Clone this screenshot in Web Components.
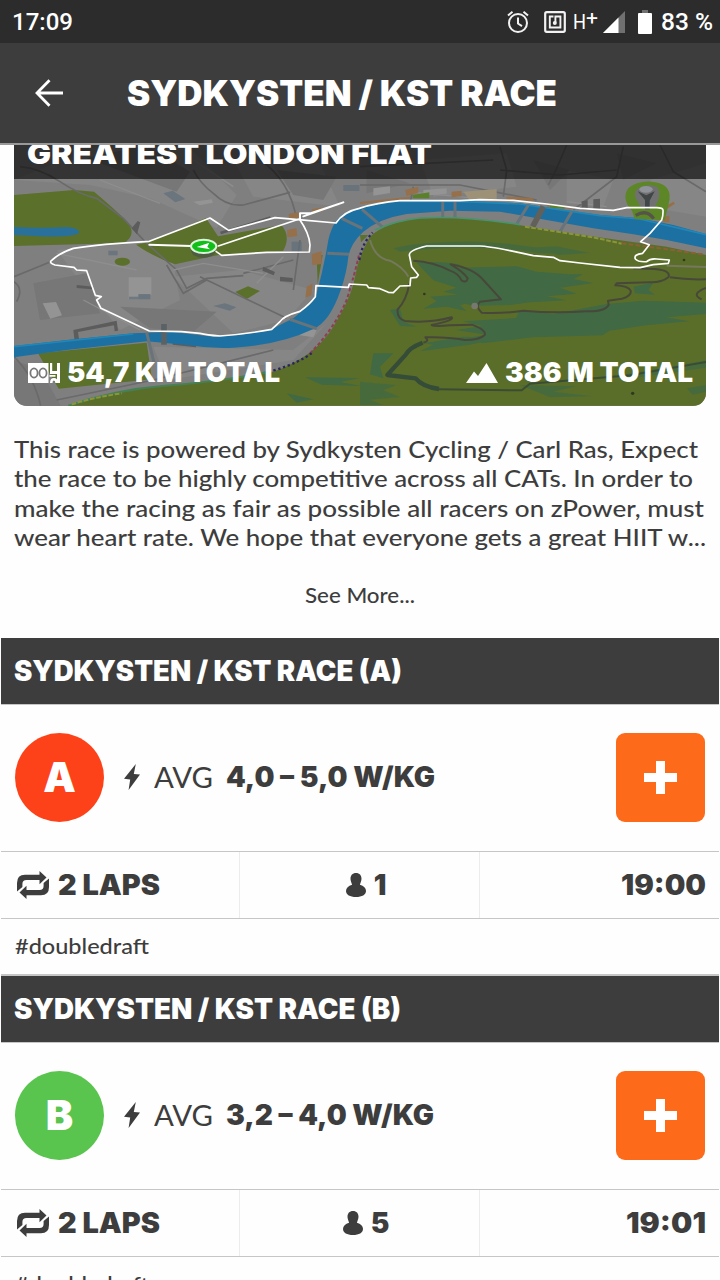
<!DOCTYPE html>
<html lang="en">
<head>
<meta charset="utf-8">
<title>Sydkysten / KST Race</title>
<style>
  html, body {
    margin: 0;
    background: #fefefe;
  }

  body {
    height: 1280px;
    overflow: hidden;
    color: #3d3d3d;
    font-family: Inter, "Open Sans", sans-serif;
    --dark: #3d3d3d;
    --line: #c6c6c6;
  }
</style>
</head>
<body>
<race-screen></race-screen>

<script>
/**
 * fit-text - one line of text, stretched to the width given in px
 */
class FitText extends HTMLElement {
  connectedCallback() {
    this.attachShadow({ mode: 'open' });
    this.shadowRoot.innerHTML = `
      <style>
        :host { display: block; flex: none; }
        span { display: inline-block; white-space: pre; transform-origin: 0 50%; }
      </style>
      <span></span>
    `;
    const span = this.shadowRoot.querySelector('span');
    span.textContent = this.getAttribute('text');
    const target = Number(this.getAttribute('width'));
    if (!target) return;
    const natural = span.getBoundingClientRect().width;
    this.style.width = `${target}px`;
    span.style.transform = `scaleX(${(target / natural).toFixed(4)})`;
  }
}
customElements.define('fit-text', FitText);

/**
 * ui-icon - inline SVG icons
 */
const LAPS_ARROW = 'M0 20.500v-8.500q0-8.300 8-8.300h14.500V0l7 6.500-7 6.800V9H9.500Q5.400 9 5.400 13v3z';

const ICONS = {
  alarm: [22, 24, `<g fill="none" stroke="#f2f2f2" stroke-width="2"><circle cx="11" cy="13" r="9"/><path d="M11 7.500v6l4 2.600M1 5.500l4.500-3.800M21 5.500l-4.500-3.800"/></g>`],
  nfc: [22, 24, `<g fill="none" stroke="#f2f2f2"><rect x="1.200" y="2.200" width="19.600" height="19.600" rx="1.500" stroke-width="2.200"/><path d="M9.500 6.500H5.800v11h10.600v-11h-5v6" stroke-width="1.900"/></g><circle cx="10.800" cy="13" r="2" fill="#f2f2f2"/>`],
  signal: [22, 22, `<path d="M0 22L22 0v22z" fill="#707070"/><path d="M0 22L15.500 6.500V22z" fill="#fff"/>`],
  battery: [14, 24, `<path d="M4 0h6v3H4z" fill="#707070"/><path d="M1 3h12q1 0 1 1v19q0 1-1 1H1q-1 0-1-1V4q0-1 1-1z" fill="#fff"/>`],
  back: [29, 28, `<path d="M14.500 1.200L2 14l12.500 12.800M2 14h26" fill="none" stroke="#fff" stroke-width="2.800"/>`],
  odometer: [32, 20, `<path d="M0 0h20.500v20H0z" fill="#fff"/><g fill="none" stroke="#787878" stroke-width="1.800"><ellipse cx="6" cy="10" rx="3.600" ry="4.600"/><ellipse cx="15" cy="10" rx="3.600" ry="4.600"/></g><path d="M22 0h2.200v8H29V0h3v20h-3v-9h-7zM21.500 12h6v1.700h-6z" fill="#fff"/><path d="M22 20q0-5 4-5t3.500 5h-2.200q0-2.500-1.500-2.500T24.500 20z" fill="#fff"/>`],
  mountain: [32, 20, `<path d="M0 20L8 8.500l4 4.500L20.500 0 32 20z" fill="#fff"/>`],
  bolt: [16, 26, `<path d="M11.800 0L0 14.800l6.200.6L4.600 26 16 10.600l-6.200-.6z" fill="#3d3d3d"/>`],
  laps: [32, 28, `<g fill="#3d3d3d"><path d="${LAPS_ARROW}"/><path d="${LAPS_ARROW}" transform="rotate(180 16 14)"/></g>`],
  person: [20, 24, `<path d="M10 0c3.500 0 5.500 2.400 5.500 5.700 0 2-1 4-1.600 6C17.700 12.800 20 15.200 20 18c0 3.700-4 6-10 6S0 21.700 0 18c0-2.800 2.300-5.200 6.100-6.300-.6-2-1.600-4-1.600-6C4.500 2.400 6.500 0 10 0z" fill="#3d3d3d"/>`],
  plus: [33, 33, `<path d="M12 0h9v12h12v9H21v12h-9V21H0v-9h12z" fill="#fff"/>`]
};

class UiIcon extends HTMLElement {
  connectedCallback() {
    const [w, h, body] = ICONS[this.getAttribute('name')];
    this.attachShadow({ mode: 'open' });
    this.shadowRoot.innerHTML = `
      <style>
        :host { display: block; flex: none; }
        svg { display: block; }
      </style>
      <svg width="${w}" height="${h}" viewBox="0 0 ${w} ${h}">${body}</svg>
    `;
  }
}
customElements.define('ui-icon', UiIcon);

// Android status bar
class StatusBar extends HTMLElement {
  connectedCallback() {
    this.attachShadow({ mode: 'open' });
    this.shadowRoot.innerHTML = `
      <style>
        :host {
          display: flex;
          align-items: center;
          box-sizing: border-box;
          height: 43px;
          padding: 0 7px 0 12px;
          background: #2c2c2c;
          color: #fff;
          font: 500 24px/42px Roboto, sans-serif;
        }
        .icons { display: flex; align-items: center; margin-left: auto; height: 42px; }
        .nfc { margin-left: 15px; }
        .net { margin-left: 7px; font-size: 21px; font-weight: 400; line-height: 42px; display: flex; }
        .net b { font-size: 20px; font-weight: 400; line-height: 34px; }
        .signal { margin-left: 5px; }
        .battery { margin-left: 13px; }
        .level { margin-left: 9px; line-height: 44px; }
        .time { line-height: 44px; }
      </style>
      <fit-text class="time" text="17:09" width="61"></fit-text>
      <div class="icons">
        <ui-icon name="alarm"></ui-icon>
        <ui-icon class="nfc" name="nfc"></ui-icon>
        <span class="net"><fit-text text="H" width="13"></fit-text><b><fit-text text="+" width="12"></fit-text></b></span>
        <ui-icon class="signal" name="signal"></ui-icon>
        <ui-icon class="battery" name="battery"></ui-icon>
        <fit-text class="level" text="83 %" width="52"></fit-text>
      </div>
    `;
  }
}
customElements.define('status-bar', StatusBar);

class AppHeader extends HTMLElement {
  connectedCallback() {
    this.attachShadow({ mode: 'open' });
    this.shadowRoot.innerHTML = `
      <style>
        :host {
          display: flex;
          align-items: center;
          box-sizing: border-box;
          height: 102px;
          padding: 0 0 1px 35px;
          gap: 63px;
          background: var(--dark);
          border-bottom: 2px solid #999;
          color: #fff;
          font-size: 35px;
          font-weight: 900;
        }
      </style>
      <ui-icon name="back"></ui-icon>
      <fit-text text="${this.getAttribute('heading')}" width="430"></fit-text>
    `;
  }
}
customElements.define('app-header', AppHeader);

/**
 * course-map - route picture with its title band and totals
 */
class CourseMap extends HTMLElement {
  connectedCallback() {
    this.attachShadow({ mode: 'open' });
    this.shadowRoot.innerHTML = `
      <style>
        :host {
          display: grid;
          grid-template-rows: 34px 1fr;
          position: relative;
          height: 261px;
          margin: 0 14px;
          overflow: hidden;
          border-radius: 0 0 13px 13px;
          color: #fff;
          font-weight: 900;
        }
        svg { position: absolute; inset: 0; width: 100%; height: 100%; }
        .band {
          position: relative;
          padding-left: 13px;
          background: rgba(0, 0, 0, 0.61);
          font-size: 29px;
          line-height: 18px;
        }
        .totals {
          position: relative;
          display: flex;
          align-items: center;
          align-self: end;
          justify-content: space-between;
          height: 34px;
          margin-bottom: 16px;
          padding: 0 13px 0 14px;
          font-size: 27px;
          line-height: 36px;
        }
        .totals div { display: flex; align-items: center; gap: 7px; }
      </style>
      <svg viewBox="42 15 2076 783" preserveAspectRatio="none">
        <rect x="42" y="15" width="2076" height="783" fill="#7f7f7f"/>
        <!-- city blocks -->
        <g fill="#868686">
          <path d="M42 120L300 15h260l150 150-60 100-200-90-180-40zM700 60l260 10 60 130-260-30zM170 330l240-20 110 60 20 110-180 90-130-160zM520 410l200-20 220 60-80 90-160 40zM460 620l420 10 100-80-100 110-380 60zM1260 60l260-20 30 100-250 30zM1700 90l140 30-30 80-110-10zM1950 120l168-50v160l-120-20z"/>
        </g>
        <g fill="#777">
          <path d="M260 55l180-40 130 80-40 60zM100 430l160-30 40 120-180 20zM360 500l290 15-70 60-130-10zM830 90l180 20-40 70-90-15zM42 660l80 30 60 107H42zM1100 90l130 40-130 30zM1600 60l110 30-60 60zM1850 40l120 30-100 50z"/>
        </g>
        <!-- parks -->
        <g fill="#5b702b">
          <path d="M42 165l180-15 60 5q60 50 100 90 30 40-10 64L42 318zM408 314l40-8 170-72 36 55 190-34q30 35 5 78L655 345l-130 28q-60-20-117-59zM114 640l326-32 16 110-280 28q-30-50-62-106zM706 456l38-17 36 14-40 24z"/>
          <ellipse cx="367" cy="365" rx="23" ry="12"/>
          <path d="M950 345h18l-15 88zM1080 285h25l-22 22z"/>
        </g>
        <path d="M42 261q80 5 160 0 35 4 36 16-10 16-120 12l-76-4z" fill="#29719a"/>
        <!-- streets -->
        <g fill="none" stroke="#6a6a6a" stroke-width="5">
          <path d="M60 80q60 5 120 45t110 50l80 60 70 75M580 90q20 40 60 70 40 40 90 35l140-38M780 60q90 60 110 180M42 410l110-45M42 425q30 20 8 60M440 310l90 80 30 55 60-30 110-8M600 410l260 125M500 375l50 85 70-40M730 400l150-40M900 300l-20 150M820 630l-360 90-290 60M42 650q60 60 80 147M1240 140l-10 50M1500 20l20 70-10 80M1700 15l-30 70-25 50M1870 20l-20 90-130 100M1980 15l40 80 98 60M1500 90l180 15 170-15M1080 80l400-20M1080 135l300 0 230 45"/>
        </g>
        <g fill="none" stroke="#8e8e8e" stroke-width="4">
          <path d="M300 120l180 70M580 60l120 80M170 340l240 50M250 480l170 90M520 390l90-20 180 30M850 350l-80 80M1220 155l210 20 190 20M1700 185l120 15M830 720l120-60 90-100"/>
        </g>
        <!-- buildings -->
        <g fill="#949494">
          <path d="M386 412h68v52h-38v14h-30zM128 490l40-4 18 40-35 10zM580 185l55-7 4 10-40 8zM1270 150l70-5v16l-70 6zM900 565l50 5-10 22-50-8zM1120 145l50-6v20l-50 8z"/>
        </g>
        <path d="M1390 155l100-8v30l-80 4z" fill="#9d9278"/>
        <g fill="#5e6d7a">
          <path d="M490 160l28-8 38 25-30 10zM325 332h28v14h-28zM415 462h36v16h-64v-8h28zM640 498l35-8 34 12-20 10zM1030 135h48v18h-48zM875 305h30v28h-30z" opacity=".7"/>
        </g>
        <g fill="#5c5c5c">
          <path d="M220 570l130-28 4 30-10 2-2-18-108 20 4 28-14 2zM660 275l150-46 3 8-150 46zM790 380l35 16-4 10-34-14zM840 410l38 4v12l-38-2zM395 265l18-22 8 4-10 36zM230 435l50 5-4 8-46-4zM518 608l70 8v6l-70-8zM1745 184l18-3v28h-18zM1780 178l20-2v35h-20z"/>
        </g>
        <g fill="#96704a">
          <path d="M935 342l30-8v38l-28 4zM862 270l27-6 3 24-30 4zM866 222l30-6v18l-28 4zM935 208l35-6v10l-33 8zM920 440l18-10-4 36-18 8zM1215 150l40-10v18l-35 10zM1355 155l30-3v17l-30 3zM1520 170l80 4v9l-80-3zM1985 205l35-20 5 6-30 20zM1990 230l18-3v20h-18zM1080 186l150-16v6l-150 16zM1640 192l80 8v7l-80-7z"/>
        </g>
        <path d="M1238 165l50-8v18h-50zM1650 195l44 3v8l-44-3z" fill="#5b802b"/>
        <!-- river -->
        <path d="M42 618L200 600 400 580 520 576 640 590Q740 586 815 568 860 545 880 535 935 490 950 460 972 380 985 300 1000 235 1040 217 1080 198 1200 182L1380 182 1560 190 1680 208 1800 225 1920 235 2020 255 2118 282V325L2000 300 1900 283 1780 265 1640 240 1500 215 1350 212 1220 222Q1140 235 1090 275 1052 310 1045 350 1040 400 1022 450 990 545 940 567 840 615 700 623 630 626 560 615L440 604 200 630 42 652z" fill="#1d71a2"/>
        <path d="M1200 184L1380 184 1560 192 1800 227 1920 237 2118 284M42 620L400 582" fill="none" stroke="#2187b8" stroke-width="5"/>
        <g fill="none" stroke="#68737a" stroke-width="9">
          <path d="M1025 235l62 30M982 340l65 3M870 538l80 28M440 578l22 90M1086 208l60 52M1328 184v50M1365 184v50M1585 195l-40 65M1715 215l-35 60"/>
        </g>
        <path d="M1630 200l-32 60" stroke="#62605a" stroke-width="17"/>
        <path d="M492 552v62" stroke="#5b6266" stroke-width="17"/>
        <!-- south hills -->
        <path d="M205 797q140-48 290-60 180-14 325-42Q945 650 1000 560 1055 470 1065 410 1075 350 1110 290 1160 245 1260 235 1410 226 1560 256L1790 291 2000 320 2118 345V797z" fill="#5a6e29"/>
        <path d="M205 797q140-48 290-60 180-14 310-42" fill="none" stroke="#478052" stroke-width="6"/>
        <path d="M1125 270q60-28 135-36 130-7 300 20" fill="none" stroke="#45956d" stroke-width="5"/>
        <path d="M930 640Q1000 570 1040 480 1065 400 1078 340" fill="none" stroke="#903f52" stroke-width="6" stroke-dasharray="10 7"/>
        <path d="M1078 360q8-50 40-82M820 692q80-25 115-53" fill="none" stroke="#29275c" stroke-width="7" stroke-dasharray="7 8"/>
        <path d="M1575 260l210 33 80 18M215 793q70-22 150-33" fill="none" stroke="#8a9638" stroke-width="6" stroke-dasharray="14 5"/>
        <path d="M1865 310l110 14 140 20" fill="none" stroke="#8c6035" stroke-width="6" stroke-dasharray="14 7"/>
        <!-- woods -->
        <g fill="#416944">
          <path d="M1250 368q60-6 130 5l-20 10 190-4 60 16 100 8 40 0-30 14 60 12-100 14 50 18-90 8 60 12-110 6-60 8-110 2-60-14 60-10-90-18 40-12-70-22zM1560 510l100 12 160-30 110-10 188 6v34l-120 10 70 12-130 12-110 16-20 14-210 6-150 18-60-14 70-12-90-14 80-12-60-14 160-10zM1270 610l120-20 110 4-90 20-150 20 40-20zM1290 470l110-8 40 14-60 20 20 18-60-14-70 6 40-22zM1900 440l60-12-15 22 20 14-60-4zM1170 510l30-5 10 40 40 15-50-2zM1120 640l60 0-40 40 10 35-40-12zM860 760l80 18-50 10zM915 712l165 2-60 12 65 12-120-4z"/>
          <path d="M1180 325q80-22 260-20 170 10 230 36l-60-2q-180-30-410-4zM1560 325l110-6 100 20-90 6zM1080 725l110 10-40 16 50 20-90 8 40 16h-70zM1560 735l170 4-70 16 120 14-130 3zM1860 705l258-44v22l-210 30zM2060 745l58-10v20l-40 10z" opacity=".75"/>
        </g>
        <!-- hill roads -->
        <g fill="none" stroke="#48483a" stroke-width="6" stroke-linejoin="round">
          <path d="M1240 362Q1300 365 1350 392 1375 400 1385 422 1400 430 1403 415 1390 395 1352 373 1420 385 1450 420L1503 478 1440 485Q1425 500 1445 518 1500 522 1570 512 1660 520 1760 514 1815 515 1826 495L1824 482 1866 476Q1895 468 1892 452 1885 438 1846 436L1850 430 1950 427Q1985 428 2005 412 2015 392 1965 387L1900 385M2010 412Q2060 420 2118 418M2118 444Q2070 462 2105 478M1228 430Q1220 480 1193 508 1190 535 1215 543 1290 550 1355 532 1365 540 1295 555 1300 560 1350 556L1415 554Q1460 570 1454 585 1440 600 1395 600 1340 590 1276 592 1290 604 1270 608"/>
        </g>
        <path d="M1268 608q-40 15-50 35l-56 62 85 10q20 25 70 32" fill="none" stroke="#354c38" stroke-width="13" stroke-linejoin="round"/>
        <path d="M1315 748l250 3 25-20 300-25 228-40" fill="none" stroke="#3a4d34" stroke-width="6"/>
        <path d="M1110 300q15 55 60 62 40 20 55 48M2000 377l118 4" fill="none" stroke="#75785d" stroke-width="6"/>
        <g fill="#33371f"><circle cx="1273" cy="462" r="4"/><circle cx="2052" cy="360" r="4"/><circle cx="1898" cy="760" r="5"/></g>
        <circle cx="1424" cy="498" r="10" fill="#77786f"/>
        <!-- loop park -->
        <path d="M1896 212q-34-38-10-69 35-25 80-16 55 10 40 64l-12 50-90-4z" fill="#5d8727"/>
        <path d="M1925 203q-40-50 0-63 24-10 48 2 14 26-10 60z" fill="#717171"/>
        <path d="M1935 208v-28l-22-26 26 12 25-12-15 28v26z" fill="#404548"/><ellipse cx="1938" cy="148" rx="20" ry="10" fill="#90939a"/>
        <path d="M1907 226q34-20 54 10" fill="none" stroke="#56534b" stroke-width="10"/>
        <!-- route -->
        <g fill="none" stroke="#fff" stroke-width="5" stroke-linejoin="round" stroke-linecap="round">
          <path d="M655 318L898 237Q928 280 930 315L928 336 800 337 665 346 648 334"/>
          <path d="M448 304L630 234 686 271 825 233 895 239 1008 249Q1030 215 1078 205 1130 188 1200 182L1380 182 1440 179 1540 181 1640 192 1740 205 1840 211 1880 203 1970 203Q1988 203 1989 210 1990 225 1985 240L1950 280 1922 305 1948 314 1928 340Q1900 343 1906 357 1915 367 1940 365 1950 355 1970 357L2008 360 2005 370 1960 374 1920 383 1860 382 1740 369 1680 362 1660 352 1600 347 1530 332Q1460 318 1440 318L1280 318Q1228 330 1228 345L1235 380 1255 405 1250 412 1232 414 1230 437 1200 438 1180 458 1165 457 1140 446 1106 443 1100 435 1048 432 1045 442 948 437 946 470Q930 492 900 514 850 528 840 545L815 568Q740 582 660 588 620 585 600 580L545 575 448 573 303 505 290 480 304 470 286 466 260 392 230 390 222 382 165 375Q145 368 155 361 180 338 220 325 300 312 448 304z"/>
          <path d="M900 236v-16h30l100-33-120 42M448 314l125 4" stroke-width="6"/>
        </g>
        <ellipse cx="610" cy="332" rx="36" ry="22" fill="#4f5a42"/>
        <ellipse cx="611" cy="319" rx="38" ry="20" fill="#12bf18" stroke="#d9f5da" stroke-width="6"/>
        <path d="M590 321l38-13-6 12 8 8z" fill="#fff"/>
      </svg>
      <div class="band"><fit-text text="GREATEST LONDON FLAT" width="405"></fit-text></div>
      <div class="totals">
        <div><ui-icon name="odometer"></ui-icon><fit-text text="54,7 KM TOTAL" width="213"></fit-text></div>
        <div><ui-icon name="mountain"></ui-icon><fit-text text="386 M TOTAL" width="188"></fit-text></div>
      </div>
    `;
  }
}
customElements.define('course-map', CourseMap);

class RaceAbout extends HTMLElement {
  connectedCallback() {
    this.attachShadow({ mode: 'open' });
    this.shadowRoot.innerHTML = `
      <style>
        :host {
          display: flex;
          flex-direction: column;
          box-sizing: border-box;
          height: 232px;
          padding: 29px 14px 0;
          font-family: Lato, sans-serif;
          font-weight: 500;
          font-size: 23.5px;
          line-height: 29.4px;
        }
        .more { align-self: center; margin-top: 28px; font-size: 20.5px; }
      </style>
      <fit-text text="This race is powered by Sydkysten Cycling / Carl Ras, Expect" width="684"></fit-text>
      <fit-text text="the race to be highly competitive across all CATs. In order to" width="679"></fit-text>
      <fit-text text="make the racing as fair as possible all racers on zPower, must" width="690"></fit-text>
      <fit-text text="wear heart rate. We hope that everyone gets a great HIIT w..." width="692"></fit-text>
      <fit-text class="more" text="See More..." width="110"></fit-text>
    `;
  }
}
customElements.define('race-about', RaceAbout);

/**
 * race-category - one start group: title, pace, laps / riders / start time
 */
class RaceCategory extends HTMLElement {
  connectedCallback() {
    const get = (name) => this.getAttribute(name);
    this.attachShadow({ mode: 'open' });
    this.shadowRoot.innerHTML = `
      <style>
        :host { display: block; height: 338px; padding: 0 1px; font-size: 28px; font-weight: 900; }
        .title {
          display: flex;
          align-items: center;
          height: 66px;
          padding-left: 13px;
          background: var(--dark);
          color: #fff;
        }
        .pace {
          display: flex;
          align-items: center;
          box-sizing: border-box;
          height: 148px;
          padding: 0 14px 2px;
          border-top: 1px solid var(--line);
          border-bottom: 1px solid var(--line);
        }
        .letter {
          display: grid;
          place-items: center;
          width: 89px;
          height: 89px;
          margin-right: 20px;
          border-radius: 50%;
          background: ${get('color')};
          color: #fff;
          font-size: 41px;
        }
        .avg { margin: 0 13px 0 14px; font-family: Lato, sans-serif; font-weight: 400; }
        .add {
          display: grid;
          place-items: center;
          width: 89px;
          height: 89px;
          margin-left: auto;
          padding: 0;
          border: 0;
          border-radius: 9px;
          background: #fd6a1a;
        }
        .facts { display: grid; grid-template: 66px / 238px 240px 240px; border-bottom: 1px solid var(--line); }
        .facts div { display: flex; align-items: center; gap: 9px; }
        .facts div + div { border-left: 1px solid #ececec; }
        .facts .laps { padding-left: 16px; }
        .facts .riders { justify-content: center; padding-left: 13px; gap: 8px; }
        .facts .start { justify-content: flex-end; padding-right: 13px; }
        .tag {
          height: 55px;
          padding-left: 14px;
          border-bottom: 2px solid var(--line);
          font: 500 20.5px/55px Lato, sans-serif;
        }
      </style>
      <div class="title"><fit-text text="SYDKYSTEN / KST RACE (${get('letter')})" width="${get('title-width')}"></fit-text></div>
      <div class="pace">
        <span class="letter">${get('letter')}</span>
        <ui-icon name="bolt"></ui-icon>
        <fit-text class="avg" text="AVG" width="59"></fit-text>
        <fit-text text="${get('pace')}" width="${get('pace-width')}"></fit-text>
        <button class="add" aria-label="Join"><ui-icon name="plus"></ui-icon></button>
      </div>
      <div class="facts">
        <div class="laps"><ui-icon name="laps"></ui-icon><fit-text text="2 LAPS" width="102"></fit-text></div>
        <div class="riders"><ui-icon name="person"></ui-icon><span>${get('riders')}</span></div>
        <div class="start"><fit-text text="${get('start')}" width="${get('start-width')}"></fit-text></div>
      </div>
      <div class="tag"><fit-text text="#doubledraft" width="134"></fit-text></div>
    `;
  }
}
customElements.define('race-category', RaceCategory);

class RaceScreen extends HTMLElement {
  connectedCallback() {
    this.attachShadow({ mode: 'open' });
    this.shadowRoot.innerHTML = `
      <style>
        :host { display: block; width: 720px; height: 1280px; overflow: hidden; }
      </style>
      <status-bar></status-bar>
      <app-header heading="SYDKYSTEN / KST RACE"></app-header>
      <course-map></course-map>
      <race-about></race-about>
      <race-category letter="A" color="#fd421a" title-width="388" pace="4,0 – 5,0 W/KG" pace-width="209" riders="1" start="19:00" start-width="85"></race-category>
      <race-category letter="B" color="#59c44e" title-width="387" pace="3,2 – 4,0 W/KG" pace-width="208" riders="5" start="19:01" start-width="80"></race-category>
    `;
  }
}
customElements.define('race-screen', RaceScreen);
</script>
</body>
</html>
